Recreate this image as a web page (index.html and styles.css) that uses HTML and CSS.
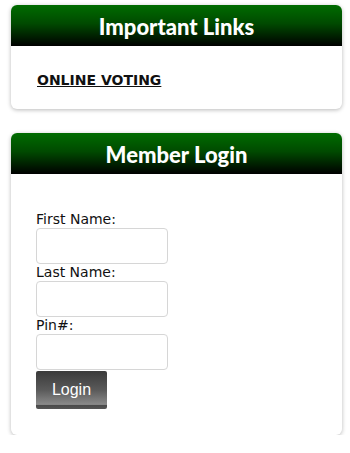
FILE: index.html
```html
<!DOCTYPE html>
<html>
<head>
<meta charset="utf-8">
<link rel="stylesheet" href="styles.css">
</head>
<body>
<div class="card links">
  <div class="card-head">Important Links</div>
  <div class="links-body">
    <a class="link" href="#">ONLINE VOTING</a>
  </div>
</div>
<div class="card login">
  <div class="card-head">Member Login</div>
  <form class="login-body">
    <label class="lbl">First Name:</label>
    <input class="field" type="text">
    <label class="lbl">Last Name:</label>
    <input class="field" type="text">
    <label class="lbl">Pin#:</label>
    <input class="field" type="password">
    <button class="btn" type="button">Login</button>
  </form>
</div>
</body>
</html>
```
FILE: styles.css
```css
html, body { margin: 0; padding: 0; background: #fff; }
body {
  padding: 5px 8px 0 11px;
  width: 331px;
  font-family: "DejaVu Sans", Verdana, sans-serif;
}
.card {
  width: 331px;
  background: #fff;
  border-radius: 6px;
  box-shadow: 0 1px 4px rgba(0,0,0,0.28);
  overflow: hidden;
}
.login { margin-top: 24px; }
.card-head {
  height: 41px;
  line-height: 43px;
  text-align: center;
  color: #fff;
  font-family: Lato, "Open Sans", sans-serif;
  font-weight: 900;
  font-size: 22px;
  background: linear-gradient(#006c00 0%, #004a00 45%, #000 100%);
}
.links-body {
  height: 63px;
  box-sizing: border-box;
  padding: 24px 0 0 26px;
}
.link {
  color: #111;
  font-weight: bold;
  font-size: 14px;
  text-decoration: underline;
}
.login-body {
  display: flex;
  flex-direction: column;
  align-items: flex-start;
  padding: 37px 0 26px 25px;
  margin: 0;
}
.lbl {
  font-size: 14px;
  line-height: 17px;
  color: #111;
  height: 17px;
}
.field {
  box-sizing: border-box;
  width: 132px;
  height: 36px;
  margin: 0;
  border: 1px solid #d6d6d6;
  border-radius: 4px;
  background: #fff;
}
.btn {
  margin-top: 1px;
  width: 71px;
  height: 38px;
  border: 0;
  border-radius: 2px;
  color: #fff;
  font-family: "Liberation Sans", Arial, sans-serif;
  font-size: 16px;
  background: linear-gradient(#3a3a3a 0%, #5a5a5a 50%, #8a8a8a 88%, #4a4a4a 90%, #555 100%);
  padding: 0;
}
```
